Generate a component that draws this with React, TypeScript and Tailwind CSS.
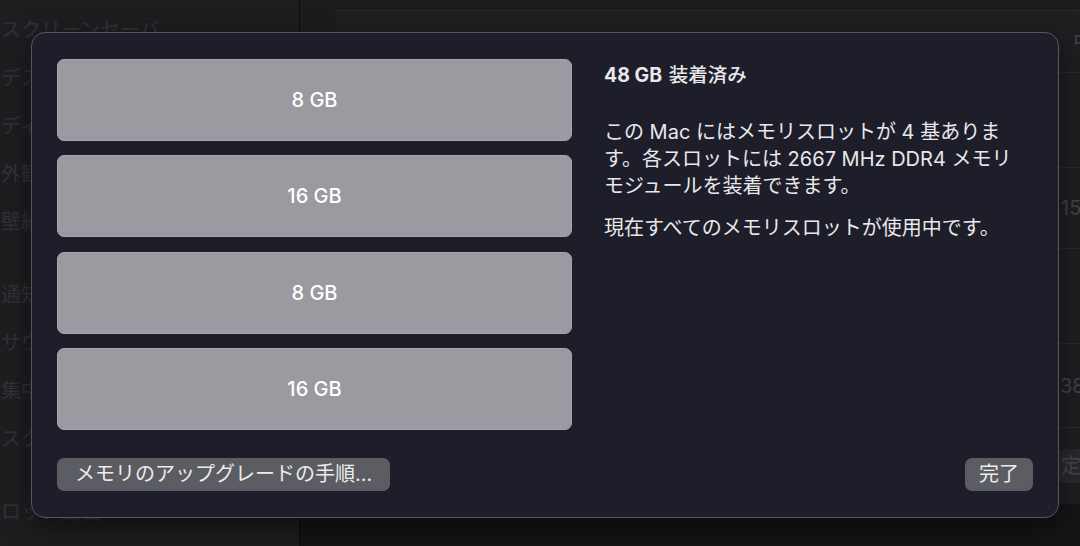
const sidebarGroups = [
  ["スクリーンセーバ", "デスクトップとDock", "ディスプレイ", "外観", "壁紙"],
  ["通知", "サウンド", "集中モード", "スクリーンタイム"],
  ["ロック画面"],
];

const slots = ["8 GB", "16 GB", "8 GB", "16 GB"];

function Background() {
  return (
    <div className="flex h-full w-full">
      {/* Sidebar */}
      <div className="flex w-[300px] shrink-0 flex-col border-r border-[#0c0c0e] bg-[#1e1e21] pt-[6px]">
        {sidebarGroups.map((group, gi) => (
          <div key={gi} className={gi > 0 ? "mt-[25px]" : ""}>
            {group.map((label) => (
              <div key={label} className="flex h-[48px] items-center whitespace-nowrap pl-[1px] text-[20px] text-[#323236]">
                {label}
              </div>
            ))}
          </div>
        ))}
      </div>

      {/* Content pane */}
      <div className="flex flex-1 flex-col bg-[#1c1c1f]">
        <div className="ml-[35px] mt-[10px] flex flex-col border-t border-[#2a2a2e] bg-[#1f1f22]">
          <Row h="h-[62px]" text="、中" pad="w-[718px]" />
          <Row h="h-[95px]" text="" pad="w-[726px]" />
          <Row h="h-[81px]" text="15" pad="w-[726px]" />
          <Row h="h-[95px]" text="" pad="w-[726px]" />
          <Row h="h-[84px]" text="38" pad="w-[725px]" />
          <div className="flex h-[76px] items-center">
            <div className="w-[723px] shrink-0" />
            <div className="rounded-l-[6px] bg-[#2a2a2e] py-[2px] pl-[3px] text-[20px] whitespace-nowrap text-[#46464b]">定。</div>
          </div>
        </div>
        <div className="flex-1 bg-[#151517]" />
      </div>
    </div>
  );
}

function Row({ h, text, pad }: { h: string; text: string; pad: string }) {
  return (
    <div className={`flex ${h} items-center border-b border-[#2b2b2f]`}>
      <div className={`${pad} shrink-0`} />
      <span className="whitespace-nowrap text-[20px] text-[#424247]">{text}</span>
    </div>
  );
}

export default function App() {
  return (
    <div className="relative h-[546px] w-[1080px] overflow-hidden bg-[#1a1a1c] font-[Inter,'Noto_Sans_CJK_JP',sans-serif]">
      <Background />

      {/* Memory sheet */}
      <div className="absolute left-[31px] top-[32px] flex h-[486px] w-[1028px] flex-col rounded-[14px] border border-[#56565d] bg-[#1e1e2a] px-[25px] pb-[26px] pt-[26px] shadow-[0_10px_30px_rgba(0,0,0,0.5)]">
        <div className="flex">
          <div className="flex w-[515px] shrink-0 flex-col gap-[14.33px]">
            {slots.map((s, i) => (
              <div
                key={i}
                className="flex h-[82px] items-center justify-center rounded-[7px] border border-[#a6a5ab] bg-[#9b9aa0] text-[20px] font-medium text-white"
              >
                {s}
              </div>
            ))}
          </div>

          <div className="ml-[32px] flex flex-col text-[#e8e8ea]">
            <div className="mt-[2px] whitespace-nowrap text-[19.5px] font-bold leading-[28px]">
              48 GB <span className="ml-[2px] font-medium">装着済み</span>
            </div>
            <div className="mt-[30px] text-[20px] leading-[27px] whitespace-nowrap">
              <div>この Mac にはメモリスロットが 4 基ありま</div>
              <div>す。各スロットには 2667 MHz DDR4 メモリ</div>
              <div>モジュールを装着できます。</div>
            </div>
            <div className="mt-[15px] whitespace-nowrap text-[20px] leading-[27px]">
              現在すべてのメモリスロットが使用中です。
            </div>
          </div>
        </div>

        <div className="mt-auto flex items-center justify-between">
          <button className="h-[33px] rounded-[7px] bg-[#5c5c63] px-[18px] text-[20px] leading-[33px] text-[#ececee]">
            メモリのアップグレードの手順...
          </button>
          <button className="h-[33px] rounded-[7px] bg-[#5c5c63] px-[14px] text-[20px] leading-[33px] text-[#ececee]">
            完了
          </button>
        </div>
      </div>
    </div>
  );
}
